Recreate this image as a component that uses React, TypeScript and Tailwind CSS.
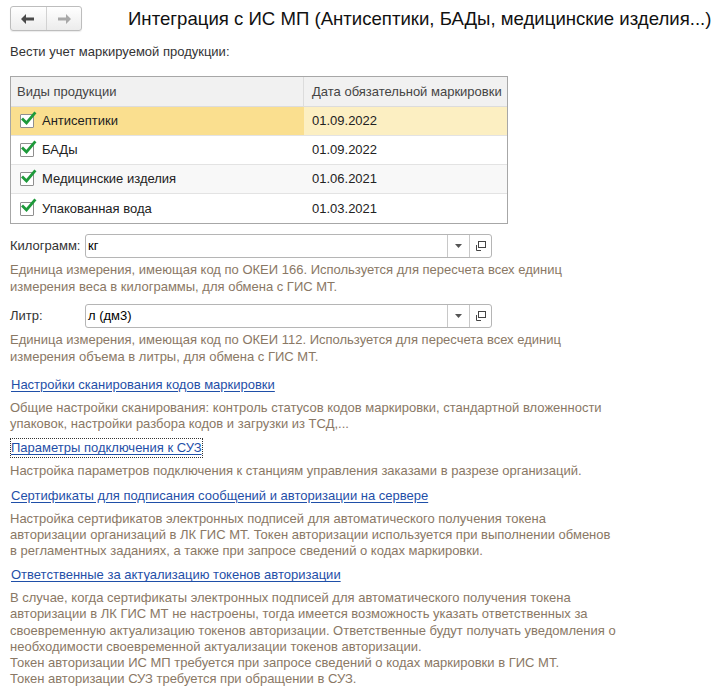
import React from 'react';

const rows = [
  { name: 'Антисептики', date: '01.09.2022' },
  { name: 'БАДы', date: '01.09.2022' },
  { name: 'Медицинские изделия', date: '01.06.2021' },
  { name: 'Упакованная вода', date: '01.03.2021' },
];

function Check() {
  return (
    <span className="w-[14px] h-[14px] border border-[#8f8f8f] bg-white flex items-center justify-center shrink-0 rounded-[1px]">
      <svg width="15" height="15" viewBox="0 0 15 15" className="-mt-[4px] ml-[3px] overflow-visible">
        <path d="M2 7.5 L5.5 11 L13.5 1.5" fill="none" stroke="#1d9a3a" strokeWidth="2.8" strokeLinecap="square" />
      </svg>
    </span>
  );
}

function UnitField({ label, value }: { label: string; value: string }) {
  return (
    <div className="flex items-center h-[24px]">
      <span className="w-[75px] text-[#333]">{label}</span>
      <div className="w-[407px] h-[24px] border border-[#b5b5b5] rounded-[3px] flex items-stretch bg-white">
        <span className="flex-1 px-[2px] flex items-center text-[#000]">{value}</span>
        <span className="w-[22px] border-l border-[#c8c8c8] flex items-center justify-center">
          <svg width="7" height="4" viewBox="0 0 7 4"><path d="M0 0 H7 L3.5 4 Z" fill="#555" /></svg>
        </span>
        <span className="w-[22px] border-l border-[#c8c8c8] flex items-center justify-center">
          <svg width="11" height="11" viewBox="0 0 11 11">
            <rect x="3.5" y="0.5" width="7" height="6" fill="none" stroke="#444" />
            <path d="M1.5 4 V9.5 H6" fill="none" stroke="#444" />
          </svg>
        </span>
      </div>
    </div>
  );
}

function Section({ title, focused, children }: { title: string; focused?: boolean; children: React.ReactNode }) {
  return (
    <div className="mt-[6px]">
      <a className={"inline-block text-[#1f4fa8] underline underline-offset-2 leading-[20px] px-[1px] " + (focused ? "outline outline-1 outline-dotted outline-[#333] -outline-offset-1" : "")}>{title}</a>
      <p className="mt-[5px] text-[#8a7865] leading-[16.2px]">{children}</p>
    </div>
  );
}

export default function App() {
  return (
    <div className="w-[722px] h-[692px] bg-white text-[13px] font-['Liberation_Sans',Arial,sans-serif] text-[#333] pl-[10px] pt-[6px] overflow-hidden">
      <div className="flex items-center">
        <div className="flex w-[72px] h-[25px] border border-[#bdbdbd] rounded-[3px] bg-gradient-to-b from-white to-[#ececec] shadow-[0_1px_1px_rgba(0,0,0,0.08)]">
          <span className="flex-1 flex items-center justify-center border-r border-[#d2d2d2]">
            <svg width="14" height="10" viewBox="0 0 14 10"><path d="M0 5 L5 0 V3.5 H13 V6.5 H5 V10 Z" fill="#4a4a4a" /></svg>
          </span>
          <span className="flex-1 flex items-center justify-center">
            <svg width="14" height="10" viewBox="0 0 14 10"><path d="M14 5 L9 0 V3.5 H1 V6.5 H9 V10 Z" fill="#a8a8a8" /></svg>
          </span>
        </div>
        <h1 className="ml-[46px] text-[18.6px] text-[#111] leading-[24px] whitespace-nowrap">Интеграция с ИС МП (Антисептики, БАДы, медицинские изделия...)</h1>
      </div>

      <div className="mt-[13px] leading-[16px]">Вести учет маркируемой продукции:</div>

      <div className="mt-[16px] w-[498px] border border-[#a7a7a7]">
        <div className="flex h-[30px] bg-[#f1f1f1] border-b border-[#dcdcdc] text-[#444]">
          <div className="w-[293px] pl-[6px] flex items-center border-r border-[#dcdcdc]">Виды продукции</div>
          <div className="flex-1 pl-[8px] flex items-center">Дата обязательной маркировки</div>
        </div>
        {rows.map((r, i) => (
          <div key={r.name} className={"flex h-[29px] text-[#222] " + (i < rows.length - 1 ? "border-b border-[#e3e3e3] " : "") + (i === 0 ? "bg-[#fcefc2]" : i % 2 === 0 ? "bg-[#f8f8f8]" : "bg-white")}>
            <div className={"w-[293px] pl-[9px] flex items-center gap-[8px] " + (i === 0 ? "bg-[#fadf8f]" : "")}>
              <Check />
              <span>{r.name}</span>
            </div>
            <div className="flex-1 pl-[8px] flex items-center">{r.date}</div>
          </div>
        ))}
      </div>

      <div className="mt-[10px]">
        <UnitField label="Килограмм:" value="кг" />
        <p className="mt-[3px] text-[#8a7865] leading-[17px]">
          Единица измерения, имеющая код по ОКЕИ 166. Используется для пересчета всех единиц<br />измерения веса в килограммы, для обмена с ГИС МТ.
        </p>
      </div>

      <div className="mt-[9px]">
        <UnitField label="Литр:" value="л (дм3)" />
        <p className="mt-[3px] text-[#8a7865] leading-[17px]">
          Единица измерения, имеющая код по ОКЕИ 112. Используется для пересчета всех единиц<br />измерения объема в литры, для обмена с ГИС МТ.
        </p>
      </div>

      <div className="mt-[10px]">
        <Section title="Настройки сканирования кодов маркировки">
          Общие настройки сканирования: контроль статусов кодов маркировки, стандартной вложенности<br />упаковок, настройки разбора кодов и загрузки из ТСД,...
        </Section>
        <Section title="Параметры подключения к СУЗ" focused>
          Настройка параметров подключения к станциям управления заказами в разрезе организаций.
        </Section>
        <Section title="Сертификаты для подписания сообщений и авторизации на сервере">
          Настройка сертификатов электронных подписей для автоматического получения токена<br />авторизации организаций в ЛК ГИС МТ. Токен авторизации используется при выполнении обменов<br />в регламентных заданиях, а также при запросе сведений о кодах маркировки.
        </Section>
        <Section title="Ответственные за актуализацию токенов авторизации">
          В случае, когда сертификаты электронных подписей для автоматического получения токена<br />авторизации в ЛК ГИС МТ не настроены, тогда имеется возможность указать ответственных за<br />своевременную актуализацию токенов авторизации. Ответственные будут получать уведомления о<br />необходимости своевременной актуализации токенов авторизации.<br />Токен авторизации ИС МП требуется при запросе сведений о кодах маркировки в ГИС МТ.<br />Токен авторизации СУЗ требуется при обращении в СУЗ.
        </Section>
      </div>
    </div>
  );
}
